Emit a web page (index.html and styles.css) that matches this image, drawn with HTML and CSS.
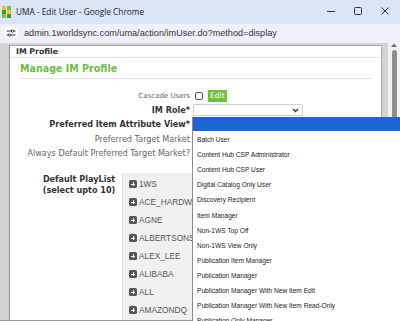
FILE: index.html
```html
<!DOCTYPE html>
<html>
<head>
<meta charset="utf-8">
<link rel="stylesheet" href="styles.css">
</head>
<body>
<div class="titlebar">
  <svg class="logo" width="9" height="12" viewBox="0 0 9 12">
    <rect x="0" y="0" width="4" height="4" fill="#f2c417"/>
    <rect x="5" y="0" width="4" height="4" fill="#7ac143"/>
    <rect x="0" y="4" width="4" height="4" fill="#3b9a3f"/>
    <rect x="5" y="4" width="4" height="4" fill="#f2c417"/>
    <rect x="0" y="8" width="4" height="4" fill="#7ac143"/>
    <rect x="5" y="8" width="4" height="4" fill="#3b9a3f"/>
  </svg>
  <span class="title">UMA - Edit User - Google Chrome</span>
  <div class="winctl">
    <svg width="10" height="10" viewBox="0 0 10 10"><path d="M1 5.5h8" stroke="#333" stroke-width="1"/></svg>
    <svg width="10" height="10" viewBox="0 0 10 10"><rect x="1.5" y="1.5" width="7" height="7" rx="1" fill="none" stroke="#333" stroke-width="1"/></svg>
    <svg width="10" height="10" viewBox="0 0 10 10"><path d="M1.5 1.5l7 7M8.5 1.5l-7 7" stroke="#333" stroke-width="1"/></svg>
  </div>
</div>
<div class="addr">
  <span class="siteicon">
    <svg width="10" height="8" viewBox="0 0 10 8">
      <path d="M0.5 2h5M7.5 2h2M0.5 6h2M4.5 6h5" stroke="#333" stroke-width="1"/>
      <circle cx="6.5" cy="2" r="1.2" fill="none" stroke="#333" stroke-width="0.9"/>
      <circle cx="3.5" cy="6" r="1.2" fill="none" stroke="#333" stroke-width="0.9"/>
    </svg>
  </span>
  <span class="url">admin.1worldsync.com/uma/action/imUser.do?method=display</span>
</div>
<div class="viewport">
  <div class="page">
    <div class="panel">
      <div class="panel-head">IM Profile</div>
      <div class="panel-body">
        <h2 class="heading">Manage IM Profile</h2>
        <div class="form">
          <div class="lbl muted small">Cascade Users</div>
          <div class="ctl"><span class="cb"></span><span class="btn">Edit</span></div>
          <div class="lbl strong">IM Role*</div>
          <div class="ctl"><div class="select"><svg width="7" height="5" viewBox="0 0 7 5"><path d="M1 1l2.5 2.5L6 1" fill="none" stroke="#333" stroke-width="1.3"/></svg></div></div>
          <div class="lbl strong">Preferred Item Attribute View*</div>
          <div class="ctl"></div>
          <div class="lbl muted">Preferred Target Market</div>
          <div class="ctl"></div>
          <div class="lbl muted">Always Default Preferred Target Market?</div>
          <div class="ctl"></div>
        </div>
        <div class="playlist-row">
          <div class="pl-label">Default PlayList<br>(select upto 10)</div>
          <ul class="pl-box">
            <li><span class="plus"></span>1WS</li>
            <li><span class="plus"></span>ACE_HARDWARE</li>
            <li><span class="plus"></span>AGNE</li>
            <li><span class="plus"></span>ALBERTSONS</li>
            <li><span class="plus"></span>ALEX_LEE</li>
            <li><span class="plus"></span>ALIBABA</li>
            <li><span class="plus"></span>ALL</li>
            <li><span class="plus"></span>AMAZONDQ</li>
          </ul>
        </div>
      </div>
    </div>
  </div>
  <div class="scrollbar">
    <svg class="uparrow" width="6" height="4" viewBox="0 0 6 4"><path d="M0 4L3 0.5L6 4z" fill="#6e6e6e"/></svg>
    <div class="thumb"></div>
  </div>
</div>
<ul class="dropdown">
  <li class="sel">&nbsp;</li>
  <li>Batch User</li>
  <li>Content Hub CSP Administrator</li>
  <li>Content Hub CSP User</li>
  <li>Digital Catalog Only User</li>
  <li>Discovery Recipient</li>
  <li>Item Manager</li>
  <li>Non-1WS Top Off</li>
  <li>Non-1WS View Only</li>
  <li>Publication Item Manager</li>
  <li>Publication Manager</li>
  <li>Publication Manager With New Item Edit</li>
  <li>Publication Manager With New Item Read-Only</li>
  <li>Publication Only Manager</li>
</ul>
</body>
</html>
```
FILE: styles.css
```css
* { box-sizing: border-box; }
html, body { margin: 0; padding: 0; }
body {
  width: 400px;
  height: 321px;
  overflow: hidden;
  position: relative;
  background: #d4d4d4;
  font-family: "DejaVu Sans", sans-serif;
}
.titlebar {
  height: 24px;
  background: #d9e5f6;
  display: flex;
  align-items: center;
  padding-left: 2px;
}
.logo { display: block; margin-top: -1px; }
.title {
  font-family: "Open Sans", sans-serif;
  font-size: 8.3px;
  color: #222;
  margin-left: 5px;
  margin-top: -2px;
}
.winctl {
  margin-left: auto;
  display: flex;
  gap: 17px;
  padding-right: 10px;
  margin-top: -3px;
}
.winctl svg { display: block; }
.addr {
  height: 19px;
  background: #edf2fa;
  display: flex;
  align-items: center;
  padding-left: 4px;
}
.siteicon {
  width: 14px;
  height: 14px;
  border-radius: 50%;
  background: #fff;
  display: flex;
  align-items: center;
  justify-content: center;
  margin-top: -1px;
}
.siteicon svg { display: block; }
.url {
  font-family: "Liberation Sans", sans-serif;
  font-size: 9.15px;
  color: #333;
  margin-left: 6px;
  margin-top: -1px;
}
.viewport {
  height: 278px;
  display: flex;
  border-bottom: 1px solid #9a9a9a;
  overflow: hidden;
}
.page {
  flex: 1;
  padding: 2px 6px 0 9px;
  background: #d4d4d4;
}
.panel {
  background: #fff;
  border: 1px solid #a8a8a8;
  border-left-color: #909090;
  height: 300px;
}
.panel-head {
  height: 12px;
  border-bottom: 1px solid #e6e6e6;
  font-size: 7.8px;
  font-weight: bold;
  color: #333;
  padding-left: 6px;
  line-height: 11px;
}
.panel-body { padding: 0 9px 0 10px; }
.heading {
  margin: 0;
  padding: 4px 0 3px;
  line-height: 13px;
  font-family: "DejaVu Sans Condensed", "DejaVu Sans", sans-serif;
  font-stretch: condensed;
  font-size: 10.6px;
  font-weight: bold;
  color: #6cbe45;
  border-bottom: 1px solid #e2e2e2;
}
.form {
  margin-top: 10px;
  display: grid;
  grid-template-columns: 170px 1fr;
  column-gap: 3px;
  grid-template-rows: 14px 14px 15px 14px 14px;
}
.lbl {
  text-align: right;
  font-size: 8.1px;
  line-height: 14px;
  white-space: nowrap;
}
.lbl.small { font-size: 7px; }
.muted { color: #666; }
.strong { color: #333; font-weight: bold; }
.ctl { display: flex; align-items: center; }
.cb {
  width: 8px;
  height: 8px;
  border: 1px solid #555;
  border-radius: 2px;
  margin-left: 2px;
  background: #fff;
}
.btn {
  margin-left: 5px;
  background: #6fbf43;
  color: #fff;
  font-size: 7.6px;
  line-height: 12px;
  padding: 0 2px;
  height: 12px;
}
.select {
  width: 110px;
  height: 12px;
  border: 1px solid #d0d0d0;
  border-radius: 1px;
  display: flex;
  align-items: center;
  justify-content: flex-end;
  padding-right: 3px;
}
.select svg { display: block; }
.playlist-row {
  display: flex;
  margin-top: 13px;
  padding-left: 16px;
}
.pl-label {
  width: 86px;
  text-align: center;
  font-size: 8.1px;
  font-weight: bold;
  color: #333;
  line-height: 11px;
  padding-top: 1px;
}
.pl-box {
  list-style: none;
  margin: 0;
  padding: 2px 0 0 6px;
  width: 71px;
  background: #f0f0f0;
  border-left: 1px solid #e0e0e0;
  height: 200px;
  overflow: hidden;
}
.pl-box li {
  height: 18px;
  display: flex;
  align-items: center;
  font-family: "Liberation Sans", sans-serif;
  font-size: 8.3px;
  color: #555;
  white-space: nowrap;
}
.plus {
  width: 8px;
  height: 8px;
  background: #555;
  border-radius: 1.5px;
  margin-right: 2px;
  position: relative;
  flex: none;
}
.plus::before, .plus::after {
  content: "";
  position: absolute;
  background: #fff;
}
.plus::before { left: 2px; right: 2px; top: 3.5px; height: 1px; }
.plus::after { top: 2px; bottom: 2px; left: 3.5px; width: 1px; }
.scrollbar {
  width: 12px;
  background: #f1f1f1;
  display: flex;
  flex-direction: column;
  align-items: center;
}
.uparrow { display: block; margin-top: 0px; }
.thumb {
  width: 5px;
  margin-top: 3px;
  height: 120px;
  background: #8e8e8e;
  border-radius: 3px;
}
.dropdown {
  position: absolute;
  left: 192px;
  top: 117px;
  right: 0;
  bottom: 0;
  margin: 0;
  padding: 0;
  list-style: none;
  background: #fff;
  border-left: 1px solid #8a8a8a;
}
.dropdown li {
  height: 15.1px;
  line-height: 15.1px;
  font-family: "Liberation Sans", sans-serif;
  font-size: 6.6px;
  color: #222;
  padding-left: 4px;
  white-space: nowrap;
}
.dropdown li.sel {
  background: #1b66d2;
  height: 14px;
  margin-bottom: 1.1px;
}
```
